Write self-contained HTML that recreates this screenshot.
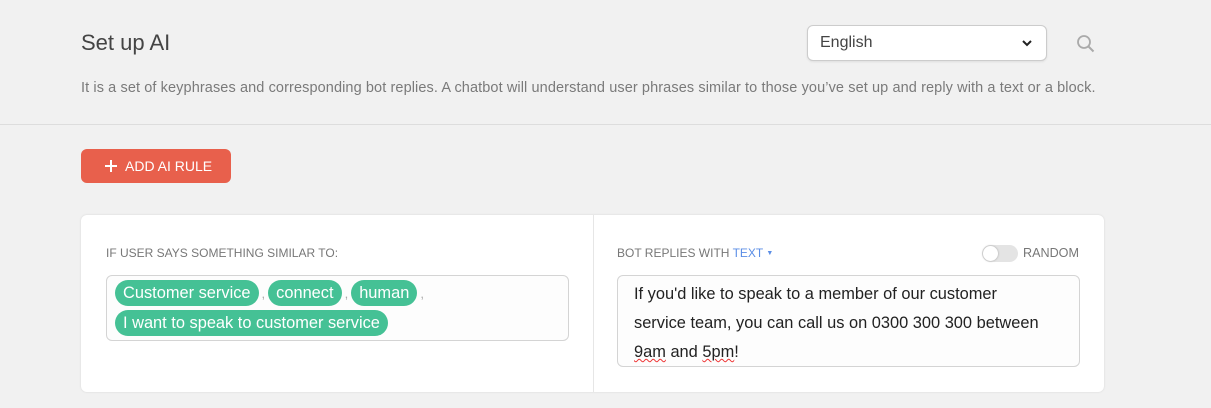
<!DOCTYPE html>
<html><head><style>
body{margin:0;width:1211px;height:408px;background:#f1f1f1;font-family:"Liberation Sans",sans-serif;position:relative;overflow:hidden}
.a{position:absolute}
h1{position:absolute;left:81px;top:30px;margin:0;font-weight:normal;font-size:22px;color:#444}
.desc{left:81px;top:80px;font-size:14.5px;letter-spacing:0.1px;color:#7a7a7a;white-space:nowrap}
.line{left:0;top:124px;width:1211px;height:1px;background:#ddd}
.btn{left:81px;top:149px;width:150px;height:34px;background:#e8604c;border-radius:6px;color:#fff;font-size:14px;line-height:34px;box-sizing:border-box;padding-left:44px}
.card{left:81px;top:215px;width:1023px;height:177px;background:#fff;border-radius:6px;box-shadow:0 0 2px rgba(0,0,0,.12)}
.lbl{font-size:12px;color:#777;white-space:nowrap}
.box{border:1px solid #d4d4d4;border-radius:6px;background:#fdfdfd;box-sizing:border-box}
.chip{display:inline-block;background:#45c195;color:#fff;font-size:16.4px;height:26px;line-height:26px;padding:0 8px;border-radius:13px}
.cm{color:#aaa;font-size:13px;margin:0 3px 0 3px}
.sq{text-decoration:underline wavy #e33;text-decoration-thickness:1px}
</style></head><body>
<h1>Set up AI</h1>
<div class="a" style="left:807px;top:25px;width:240px;height:36px;background:#fff;border:1px solid #ccc;border-radius:6px;box-sizing:border-box;box-shadow:0 1px 2px rgba(0,0,0,.08)">
<span class="a" style="left:12px;top:8px;font-size:16px;color:#444">English</span>
<svg class="a" style="left:213px;top:13px" width="12" height="9" viewBox="0 0 12 9"><path d="M2 2l4 4 4-4" stroke="#222" stroke-width="2" fill="none"/></svg>
</div>
<svg class="a" style="left:1076px;top:34px" width="20" height="20" viewBox="0 0 20 20"><circle cx="8" cy="8" r="6" stroke="#aaa" stroke-width="1.8" fill="none"/><path d="M12.5 12.5l5 5" stroke="#aaa" stroke-width="2"/></svg>
<div class="a desc">It is a set of keyphrases and corresponding bot replies. A chatbot will understand user phrases similar to those you’ve set up and reply with a text or a block.</div>
<div class="a line"></div>
<div class="a btn"><svg class="a" style="left:24px;top:11px" width="12" height="12"><path d="M6 0v12M0 6h12" stroke="#fff" stroke-width="2"/></svg>ADD AI RULE</div>
<div class="a card">
<div class="a" style="left:512px;top:0;width:1px;height:177px;background:#e6e6e6"></div>
<div class="a lbl" style="left:25px;top:31px">IF USER SAYS SOMETHING SIMILAR TO:</div>
<div class="a box" style="left:25px;top:60px;width:463px;height:66px;padding:4px 8px">
<div style="height:30px"><span class="chip">Customer service</span><span class="cm">,</span><span class="chip">connect</span><span class="cm">,</span><span class="chip">human</span><span class="cm">,</span></div>
<div><span class="chip">I want to speak to customer service</span></div>
</div>
<div class="a lbl" style="left:536px;top:31px">BOT REPLIES WITH <span style="color:#5b8ee6">TEXT</span> <span style="color:#5b8ee6;font-size:7px;vertical-align:2px">▼</span></div>
<div class="a" style="left:901px;top:30px;width:36px;height:17px;border-radius:9px;background:#e4e4e4"><div class="a" style="left:1px;top:1px;width:15px;height:15px;border-radius:50%;background:#fff;box-shadow:0 0 2px rgba(0,0,0,.3)"></div></div>
<div class="a lbl" style="left:942px;top:31px;font-size:12.6px">RANDOM</div>
<div class="a box" style="left:536px;top:60px;width:463px;height:92px;padding:4px 20px 4px 16px;font-size:16.4px;line-height:29px;color:#222">If you'd like to speak to a member of our customer<br>service team, you can call us on 0300 300 300 between <span class="sq">9am</span> and <span class="sq">5pm</span>!</div>
</div>
</body></html>
